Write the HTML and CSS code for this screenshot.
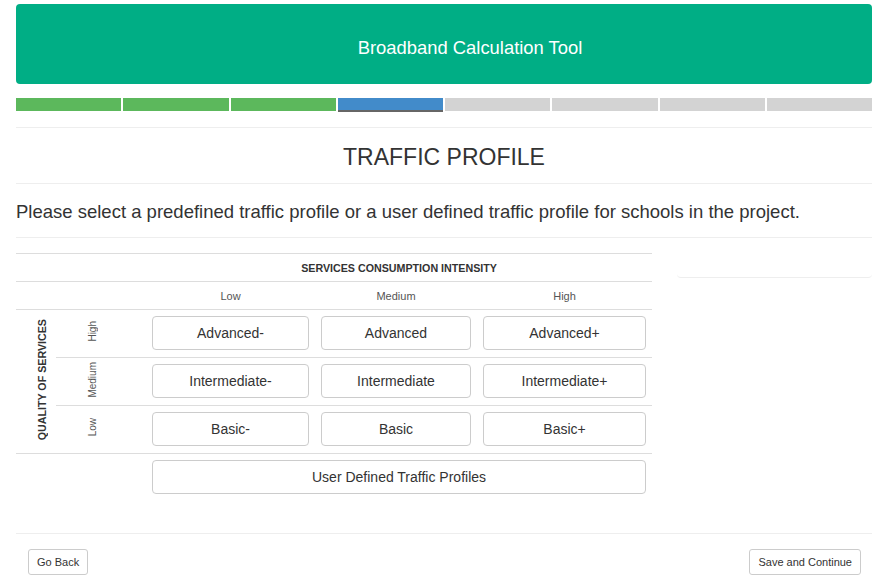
FILE: index.html
```html
<!DOCTYPE html>
<html lang="en">
<head>
<meta charset="utf-8">
<title>Broadband Calculation Tool</title>
<link rel="stylesheet" href="styles.css">
</head>
<body>
<div class="page">
  <header class="banner">Broadband Calculation Tool</header>
  <div class="steps">
    <span class="step done"></span>
    <span class="step done"></span>
    <span class="step done"></span>
    <span class="step current"></span>
    <span class="step"></span>
    <span class="step"></span>
    <span class="step"></span>
    <span class="step"></span>
  </div>
  <h1 class="title">TRAFFIC PROFILE</h1>
  <p class="intro">Please select a predefined traffic profile or a user defined traffic profile for schools in the project.</p>
  <div class="content">
    <table class="matrix">
      <colgroup>
        <col class="c1"><col class="c2"><col class="c3"><col class="c4"><col class="c5">
      </colgroup>
      <tr class="head-row">
        <td></td><td></td>
        <th colspan="3" class="group-head">SERVICES CONSUMPTION INTENSITY</th>
      </tr>
      <tr class="head-row">
        <td></td><td></td>
        <td class="col-head">Low</td>
        <td class="col-head">Medium</td>
        <td class="col-head">High</td>
      </tr>
      <tr>
        <th rowspan="3" class="qos"><span class="vert bold">QUALITY OF SERVICES</span></th>
        <td class="row-head"><span class="vert">High</span></td>
        <td class="cell"><button class="choice">Advanced-</button></td>
        <td class="cell"><button class="choice">Advanced</button></td>
        <td class="cell"><button class="choice">Advanced+</button></td>
      </tr>
      <tr>
        <td class="row-head"><span class="vert">Medium</span></td>
        <td class="cell"><button class="choice">Intermediate-</button></td>
        <td class="cell"><button class="choice">Intermediate</button></td>
        <td class="cell"><button class="choice">Intermediate+</button></td>
      </tr>
      <tr>
        <td class="row-head"><span class="vert">Low</span></td>
        <td class="cell"><button class="choice">Basic-</button></td>
        <td class="cell"><button class="choice">Basic</button></td>
        <td class="cell"><button class="choice">Basic+</button></td>
      </tr>
      <tr class="last-row">
        <td></td><td></td>
        <td colspan="3" class="cell"><button class="choice">User Defined Traffic Profiles</button></td>
      </tr>
    </table>
    <div class="side-panel"></div>
  </div>
  <footer class="actions">
    <button class="small-btn">Go Back</button>
    <button class="small-btn">Save and Continue</button>
  </footer>
</div>
</body>
</html>
```
FILE: styles.css
```css
* { box-sizing: border-box; }
html, body { margin: 0; padding: 0; background: #fff; }
body {
  font-family: "Liberation Sans", Arial, sans-serif;
  color: #333;
}
.page {
  width: 856px;
  margin: 0 0 0 16px;
  padding-top: 4px;
}
.banner {
  height: 80px;
  padding: 8px 0 0 52px;
  background: #00ae85;
  border-radius: 4px;
  color: #fff;
  font-size: 18.4px;
  display: flex;
  align-items: center;
  justify-content: center;
}
.steps {
  margin-top: 14px;
  display: grid;
  grid-template-columns: repeat(8, 1fr);
  gap: 2px;
  height: 13px;
}
.step { background: #d3d3d3; }
.step.done { background: #5cb85c; }
.step.current {
  background: #428bca;
  box-shadow: inset 0 -1px 0 #666, 0 1px 0 #666;
}
.title {
  margin: 16px 0 0;
  border-top: 1px solid #eee;
  border-bottom: 1px solid #eee;
  height: 57px;
  padding-top: 2px;
  line-height: 54px;
  text-align: center;
  font-size: 23px;
  font-weight: normal;
  color: #333;
}
.intro {
  margin: 0;
  height: 54px;
  padding-top: 17px;
  border-bottom: 1px solid #eee;
  font-size: 18.5px;
  line-height: 22px;
  color: #333;
}
.content {
  display: flex;
  gap: 25px;
  align-items: flex-start;
}
.matrix {
  margin-top: 15px;
  width: 636px;
  table-layout: fixed;
  border-collapse: collapse;
}
.c1 { width: 40px; }
.c2 { width: 90px; }
.c3 { width: 169px; }
.c4 { width: 162px; }
.c5 { width: 175px; }
.matrix td, .matrix th {
  padding: 0;
  border-top: 1px solid #ddd;
}
.head-row td, .head-row th { height: 28px; }
.group-head {
  font-size: 10.7px;
  font-weight: bold;
  color: #333;
  text-align: center;
}
.col-head {
  font-size: 11px;
  color: #555;
  text-align: center;
}
.qos {
  text-align: center;
  padding-left: 12px !important;
  vertical-align: middle;
}
.row-head {
  text-align: center;
  padding-right: 18px !important;
  vertical-align: middle;
}
.vert {
  display: inline-block;
  writing-mode: vertical-rl;
  transform: rotate(180deg);
  font-size: 10px;
  color: #555;
}
.vert.bold {
  font-size: 10.7px;
  font-weight: bold;
  color: #333;
}
.cell {
  height: 48px;
  padding: 6px 6px 7px !important;
  vertical-align: top;
}
.last-row td { height: 48px; }
.choice {
  display: block;
  width: 100%;
  height: 34px;
  background: #fff;
  border: 1px solid #ccc;
  border-radius: 4px;
  font-family: "Liberation Sans", Arial, sans-serif;
  font-size: 14px;
  color: #333;
  padding: 0;
}
.side-panel {
  width: 195px;
  height: 40px;
  border-bottom: 1px solid #eee;
  border-radius: 0 0 4px 4px;
}
.actions {
  margin-top: 31px;
  border-top: 1px solid #eee;
  padding: 15px 11px 0 12px;
  display: flex;
  justify-content: space-between;
}
.small-btn {
  height: 26px;
  padding: 0 8px;
  background: #fff;
  border: 1px solid #ccc;
  border-radius: 3px;
  font-family: "Liberation Sans", Arial, sans-serif;
  font-size: 11px;
  color: #333;
}
```
